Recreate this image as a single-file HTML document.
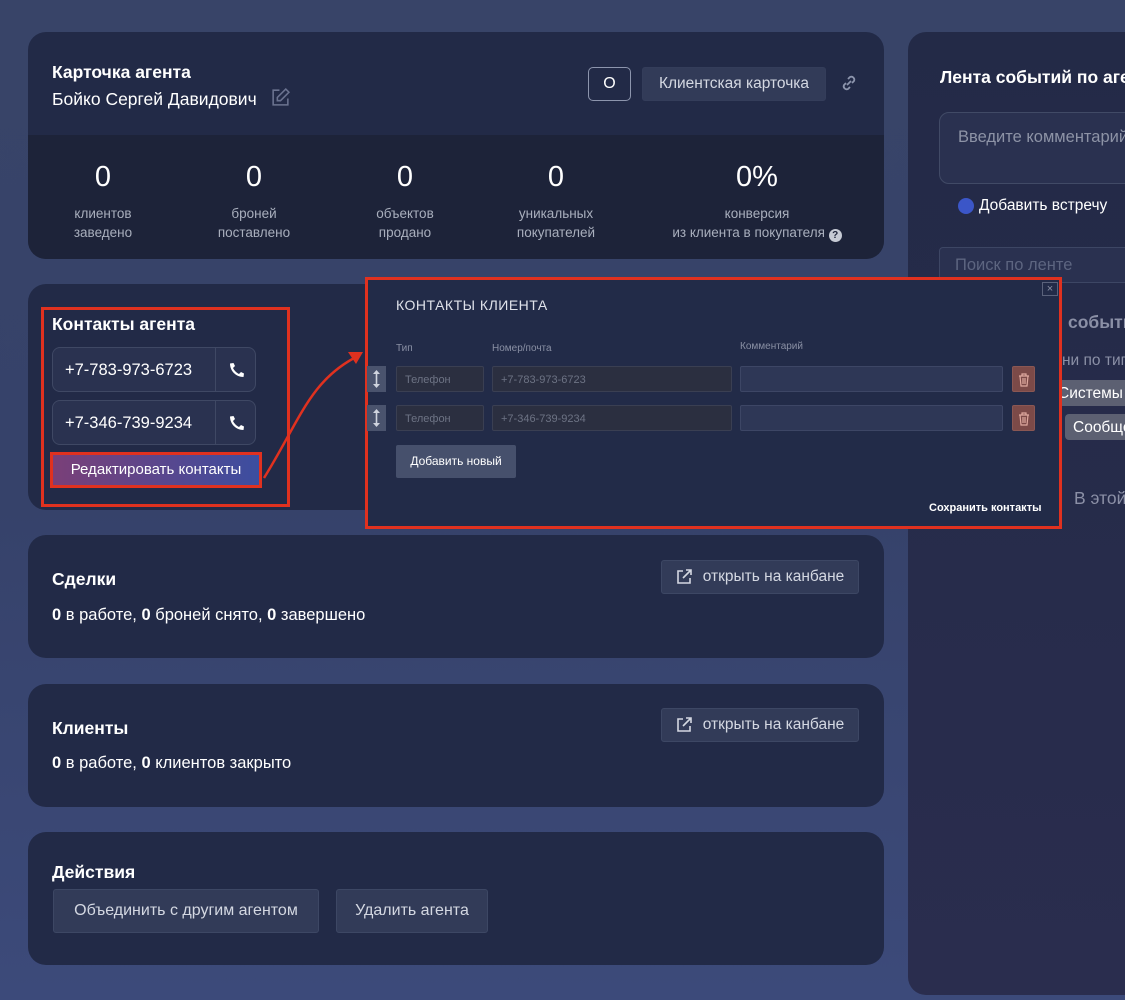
<!DOCTYPE html>
<html><head><meta charset="utf-8"><style>
*{box-sizing:border-box;margin:0;padding:0}
body{width:1125px;height:1000px;overflow:hidden;position:relative;font-family:"Liberation Sans",sans-serif;background:linear-gradient(180deg,#384468 0%,#36426a 50%,#3c4a7a 100%);color:#fff}
.a{position:absolute}
.card{position:absolute;background:#222a47;border-radius:18px;overflow:hidden}
.h{font-weight:bold;font-size:17.5px;color:#fff}
.btn{position:absolute;background:#323b58;border:1px solid #3d4764;border-radius:3px;color:#d4d8e2;font-size:15px;display:flex;align-items:center;justify-content:center}
.stat{position:absolute;top:160px;width:160px;text-align:center;color:#a9afbd;font-size:13.5px;line-height:19px}
.stat b{display:block;color:#fff;font-size:29px;font-weight:normal;line-height:34px;margin-bottom:10px}
.ph{position:absolute;left:52px;width:204px;height:45px;border:1px solid #3f4864;border-radius:8px;background:#2a3250;font-size:16.5px;color:#fff}
.ph span{position:absolute;left:12px;top:13px}
.ph i{position:absolute;left:162px;top:0;width:1px;height:43px;background:#3f4864}
.ph svg{position:absolute;left:174px;top:12px}
.in{position:absolute;height:26px;background:#2b2f40;border:1px solid #3a3f52;border-radius:2px;font-size:11px;color:#6d7384;padding:7px 8px}
.in2{position:absolute;height:26px;background:#2e3756;border:1px solid #3d4665;border-radius:2px}
.del{position:absolute;width:23px;height:26px;background:#7c4a48;border:1px solid #8a5753;border-radius:2px}
.del svg{position:absolute;left:5px;top:6px}
.grip{position:absolute;left:367px;width:19px;height:26px;background:#4a536d}
.grip svg{position:absolute;left:6px;top:4px}
</style></head><body>
<div class="a" style="left:908px;top:32px;width:240px;height:963px;background:linear-gradient(180deg,#232a47,#2a2d4e);border-radius:18px"></div>
<div class="a h" style="left:940px;top:67px;white-space:nowrap">Лента событий по агенту</div>
<div class="a" style="left:939px;top:112px;width:220px;height:72px;border:1px solid #414a66;border-radius:10px;background:#2a3150"></div>
<div class="a" style="left:958px;top:128px;color:#8d93a6;font-size:16.5px;white-space:nowrap">Введите комментарий</div>
<div class="a" style="left:958px;top:198px;width:16px;height:16px;border-radius:50%;background:#3b56c8"></div>
<div class="a" style="left:979px;top:197px;font-size:15.5px;color:#fff;white-space:nowrap">Добавить встречу</div>
<div class="a" style="left:939px;top:247px;width:200px;height:36px;border:1px solid #3d4664;border-radius:4px;background:#2a3150"></div>
<div class="a" style="left:955px;top:256px;color:#5d6580;font-size:16.5px;white-space:nowrap">Поиск по ленте</div>
<div class="a" style="left:1068px;top:312px;color:#8b90a6;font-size:17.5px;font-weight:bold">события</div>
<div class="a" style="left:1062px;top:352px;color:#8b90a6;font-size:15.5px;white-space:nowrap">ни по типу</div>
<div class="a" style="left:1050px;top:380px;width:80px;height:26px;background:#5c6072;border-radius:4px"></div>
<div class="a" style="left:1058px;top:385px;font-size:15.5px;color:#fff">Системы</div>
<div class="a" style="left:1065px;top:414px;width:70px;height:26px;background:#5c6072;border-radius:4px"></div>
<div class="a" style="left:1073px;top:419px;font-size:15.5px;color:#fff;white-space:nowrap">Сообщения</div>
<div class="a" style="left:1074px;top:488px;font-size:17.5px;color:#8b90a6;white-space:nowrap">В этой</div>

<div class="card" style="left:28px;top:32px;width:856px;height:227px">
<div class="a" style="left:0;top:103px;width:856px;height:124px;background:#1d2339"></div>
</div>
<div class="a h" style="left:52px;top:62px">Карточка агента</div>
<div class="a" style="left:52px;top:89px;font-size:17.5px;color:#fff">Бойко Сергей Давидович</div>
<svg class="a" style="left:270px;top:87px" width="21" height="21" viewBox="0 0 20 20" fill="none" stroke="#6b7390" stroke-width="1.5"><path d="M9 3H3v14h14v-6"/><path d="M15 2l3 3-8 8H7v-3z"/></svg>
<div class="a" style="left:588px;top:67px;width:43px;height:34px;border:1px solid #8d95ad;border-radius:5px;font-size:16px;text-align:center;line-height:32px;color:#fff">O</div>
<div class="btn" style="left:642px;top:67px;width:184px;height:34px;border-color:#343d5a;font-size:15.5px">Клиентская карточка</div>
<svg class="a" style="left:838px;top:72px" width="22" height="22" viewBox="0 0 22 22" fill="none" stroke="#8d95ad" stroke-width="1.8"><path d="M9 13l4-4"/><path d="M10 7l2-2a3 3 0 014 4l-2 2"/><path d="M12 15l-2 2a3 3 0 01-4-4l2-2"/></svg>
<div class="stat" style="left:23px"><b>0</b>клиентов<br>заведено</div>
<div class="stat" style="left:174px"><b>0</b>броней<br>поставлено</div>
<div class="stat" style="left:325px"><b>0</b>объектов<br>продано</div>
<div class="stat" style="left:476px"><b>0</b>уникальных<br>покупателей</div>
<div class="stat" style="left:657px;width:200px"><b>0%</b>конверсия<br>из клиента в покупателя <span style="display:inline-block;width:13px;height:13px;border-radius:50%;background:#c6cad4;color:#1d2339;font-size:10px;line-height:13px;font-weight:bold;vertical-align:-1px">?</span></div>

<div class="card" style="left:28px;top:284px;width:400px;height:226px"></div>
<div class="a" style="left:41px;top:307px;width:249px;height:200px;border:3px solid #e0311f"></div>
<div class="a h" style="left:52px;top:314px">Контакты агента</div>
<div class="ph" style="top:347px"><span>+7-783-973-6723</span><i></i><svg width="20" height="20" viewBox="0 0 20 20"><path d="M17 13.5l-3-1.5-2 2c-2.5-1.2-4.8-3.5-6-6l2-2L6.5 3 3 3.5C3 11 9 17 16.5 17z" fill="#fff"/></svg></div>
<div class="ph" style="top:400px"><span>+7-346-739-9234</span><i></i><svg width="20" height="20" viewBox="0 0 20 20"><path d="M17 13.5l-3-1.5-2 2c-2.5-1.2-4.8-3.5-6-6l2-2L6.5 3 3 3.5C3 11 9 17 16.5 17z" fill="#fff"/></svg></div>
<div class="a" style="left:50px;top:452px;width:212px;height:36px;border:3px solid #e0311f;background:linear-gradient(90deg,#7a3f78,#3c4ea0);font-size:15px;color:#fff;text-align:center;line-height:30px">Редактировать контакты</div>
<svg class="a" style="left:0;top:0" width="400" height="500"><path d="M264 478 C300 420 310 380 358 356" fill="none" stroke="#e0311f" stroke-width="2.5"/><path d="M363 352 L348 352 L356 364 Z" fill="#e0311f"/></svg>

<div class="a" style="left:365px;top:277px;width:697px;height:252px;border:3px solid #e0311f;background:#222b48"></div>
<div class="a" style="left:1042px;top:282px;width:16px;height:14px;border:1px solid #5a627b;color:#8a90a4;font-size:11px;text-align:center;line-height:12px">×</div>
<div class="a" style="left:396px;top:297px;font-size:14px;color:#dfe2ea;letter-spacing:0.5px">КОНТАКТЫ КЛИЕНТА</div>
<div class="a" style="left:396px;top:343px;font-size:10px;color:#8a90a4">Тип</div>
<div class="a" style="left:492px;top:343px;font-size:10px;color:#8a90a4">Номер/почта</div>
<div class="a" style="left:740px;top:341px;font-size:10px;color:#8a90a4">Комментарий</div>
<div class="grip" style="top:366px"><svg width="7" height="18" viewBox="0 0 7 18" fill="#d0d4de"><path d="M3.5 0L7 4H0z M3.5 18L0 14h7z"/><rect x="2.7" y="3" width="1.6" height="12"/></svg></div>
<div class="in" style="left:396px;top:366px;width:88px">Телефон</div>
<div class="in" style="left:492px;top:366px;width:240px">+7-783-973-6723</div>
<div class="in2" style="left:740px;top:366px;width:263px"></div>
<div class="del" style="left:1012px;top:366px"><svg width="12" height="14" viewBox="0 0 12 14" fill="none" stroke="#e0aaa0" stroke-width="1.2"><path d="M1 3h10M4 3V1h4v2M2 3l1 10h6l1-10M5 5v6M7 5v6"/></svg></div>
<div class="grip" style="top:405px"><svg width="7" height="18" viewBox="0 0 7 18" fill="#d0d4de"><path d="M3.5 0L7 4H0z M3.5 18L0 14h7z"/><rect x="2.7" y="3" width="1.6" height="12"/></svg></div>
<div class="in" style="left:396px;top:405px;width:88px">Телефон</div>
<div class="in" style="left:492px;top:405px;width:240px">+7-346-739-9234</div>
<div class="in2" style="left:740px;top:405px;width:263px"></div>
<div class="del" style="left:1012px;top:405px"><svg width="12" height="14" viewBox="0 0 12 14" fill="none" stroke="#e0aaa0" stroke-width="1.2"><path d="M1 3h10M4 3V1h4v2M2 3l1 10h6l1-10M5 5v6M7 5v6"/></svg></div>
<div class="a" style="left:396px;top:445px;width:120px;height:33px;background:#46506c;border-radius:2px;font-size:12px;color:#fff;text-align:center;line-height:33px">Добавить новый</div>
<div class="a" style="left:929px;top:502px;font-size:11px;font-weight:bold;color:#fff">Сохранить контакты</div>

<div class="card" style="left:28px;top:535px;width:856px;height:123px"></div>
<div class="a h" style="left:52px;top:569px">Сделки</div>
<div class="a" style="left:52px;top:606px;font-size:16.5px"><b>0</b> в работе, <b>0</b> броней снято, <b>0</b> завершено</div>
<div class="btn" style="left:661px;top:560px;width:198px;height:34px;font-size:15.5px"><svg width="16" height="16" viewBox="0 0 16 16" fill="none" stroke="#d4d8e2" stroke-width="1.6" style="margin-right:11px"><path d="M7 2H2v12h12V9"/><path d="M10 1h5v5M15 1L7 9"/></svg>открыть на канбане</div>

<div class="card" style="left:28px;top:684px;width:856px;height:123px"></div>
<div class="a h" style="left:52px;top:718px">Клиенты</div>
<div class="a" style="left:52px;top:754px;font-size:16.5px"><b>0</b> в работе, <b>0</b> клиентов закрыто</div>
<div class="btn" style="left:661px;top:708px;width:198px;height:34px;font-size:15.5px"><svg width="16" height="16" viewBox="0 0 16 16" fill="none" stroke="#d4d8e2" stroke-width="1.6" style="margin-right:11px"><path d="M7 2H2v12h12V9"/><path d="M10 1h5v5M15 1L7 9"/></svg>открыть на канбане</div>

<div class="card" style="left:28px;top:832px;width:856px;height:133px"></div>
<div class="a h" style="left:52px;top:862px">Действия</div>
<div class="btn" style="left:53px;top:889px;width:266px;height:44px;font-size:16px">Объединить с другим агентом</div>
<div class="btn" style="left:336px;top:889px;width:152px;height:44px;font-size:16px">Удалить агента</div>
</body></html>
